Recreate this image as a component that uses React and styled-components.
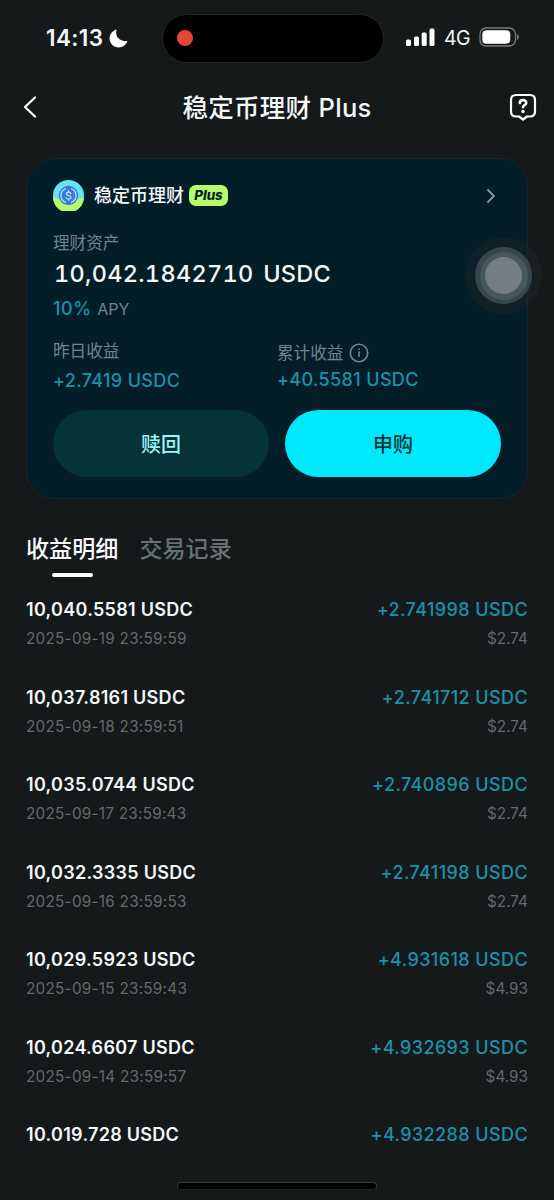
import React from "react";
import styled, { createGlobalStyle } from "styled-components";

const GlobalStyle = createGlobalStyle`
  * {
    box-sizing: border-box;
  }
  body {
    margin: 0;
    background: #15191a;
    font-family: Inter, "Noto Sans CJK SC", sans-serif;
    color: #f4f7f8;
  }
  button {
    font-family: inherit;
    border: none;
    padding: 0;
    background: none;
    color: inherit;
  }
`;

const Page = styled.div`
  position: relative;
  display: flex;
  flex-direction: column;
  width: 554px;
  height: 1200px;
  overflow: hidden;
  background: #15191a;

  > * {
    flex-shrink: 0;
  }
`;

// Status bar
const StatusBar = styled.div`
  display: grid;
  grid-template-columns: 162px 222px 1fr;
  align-items: center;
  height: 76px;
`;

const Clock = styled.div`
  display: flex;
  align-items: center;
  gap: 5px;
  padding-left: 46px;
  font-size: 22.5px;
  line-height: 28px;
  font-weight: 600;
  letter-spacing: 0.4px;
`;

const Island = styled.div`
  display: flex;
  align-items: center;
  height: 49px;
  padding-left: 14px;
  border: 1px solid #222627;
  border-radius: 25px;
  background: #000;
`;

const RecordDot = styled.span`
  width: 16px;
  height: 16px;
  border-radius: 50%;
  background: #e54437;
`;

const Signals = styled.div`
  display: flex;
  align-items: center;
  padding: 0 0 2px 22px;
`;

const Network = styled.span`
  margin: 2px 9px 0 9px;
  font-size: 19.5px;
  line-height: 24px;
  letter-spacing: -0.7px;
`;

// Navigation
const Header = styled.header`
  display: grid;
  grid-template-columns: 60px 1fr 60px;
  align-items: center;
  height: 62px;
`;

const Title = styled.h1`
  margin: 2px 0 0;
  text-align: center;
  font-size: 25.5px;
  line-height: 36px;
  font-weight: 500;
  letter-spacing: 0.3px;
`;

const NavButton = styled.button`
  display: flex;
  justify-content: ${(p) => (p.$end ? "flex-end" : "flex-start")};
  padding: ${(p) => (p.$end ? "0 17px 0 0" : "0 0 0 22px")};
`;

// Asset card
const Card = styled.section`
  height: 341px;
  margin: 20px 26px 0;
  padding: 21px 26px 0;
  border: 1px solid #1b2529;
  border-radius: 28px;
  background: #031e28;
`;

const CardHead = styled.div`
  display: flex;
  align-items: center;
  height: 31px;
`;

const CardTitle = styled.span`
  margin: 1px 5px 0 10px;
  font-size: 18px;
  line-height: 28px;
  font-weight: 500;
`;

const PlusTag = styled.span`
  width: 39px;
  height: 21px;
  border-radius: 7px;
  background: #b4fc6d;
  color: #071b22;
  text-align: center;
  font-size: 13.3px;
  line-height: 21px;
  font-weight: 800;
  font-style: italic;
`;

const HeadArrow = styled.svg`
  margin-left: auto;
`;

const Label = styled.div`
  display: flex;
  align-items: center;
  gap: 6px;
  height: 24px;
  font-size: 16.6px;
  line-height: 24px;
  color: #74838a;
`;

const AssetLabel = styled(Label)`
  margin-top: 20px;
`;

const Balance = styled.div`
  margin: 3px 0 7px 1px;
  font-size: 23.5px;
  line-height: 32px;
  font-weight: 500;
  letter-spacing: 0.3px;
  word-spacing: 3px;
  font-variant-numeric: tabular-nums;
`;

const Apy = styled.div`
  font-size: 16px;
  line-height: 24px;
  color: #74838a;

  b {
    margin-right: 1px;
    font-size: 18px;
    font-weight: 500;
    letter-spacing: 0.6px;
    color: #1b91a9;
  }
`;

const Stats = styled.div`
  display: grid;
  grid-template-columns: 224px 1fr;
  margin-top: 18px;
`;

const Stat = styled.div`
  padding-top: ${(p) => p.$top}px;
`;

const StatValue = styled.div`
  margin-top: ${(p) => p.$gap}px;
  font-size: 18px;
  line-height: 24px;
  font-weight: 500;
  letter-spacing: 0.35px;
  color: #1b91a9;
`;

const Actions = styled.div`
  display: grid;
  grid-template-columns: 1fr 1fr;
  gap: 16px;
  margin-top: 17px;
`;

const ActionButton = styled.button`
  height: 67px;
  padding-bottom: 1px;
  border-radius: 34px;
  font-size: 20px;
  font-weight: 500;
  background: ${(p) => (p.$primary ? "#00e9fb" : "#06323a")};
  color: ${(p) => (p.$primary ? "#06323c" : "#9cf6f8")};
`;

// Tabs and records
const Tabs = styled.nav`
  display: flex;
  gap: 21px;
  height: 46px;
  margin: 32px 26px 0;
`;

const Tab = styled.button`
  display: flex;
  flex-direction: column;
  align-items: center;
  font-size: 23.1px;
  line-height: 36px;
  font-weight: 500;
  color: ${(p) => (p.$active ? "#f8fafa" : "#677275")};

  &::after {
    content: "";
    width: 41px;
    height: 4px;
    margin-top: 6px;
    border-radius: 2px;
    background: ${(p) => (p.$active ? "#fff" : "transparent")};
  }
`;

const Records = styled.ul`
  margin: 0;
  padding: 21px 26px 0;
  list-style: none;
`;

const Record = styled.li`
  display: flex;
  justify-content: space-between;
  height: 87.55px;
`;

const Column = styled.div`
  text-align: ${(p) => (p.$right ? "right" : "left")};
`;

const Amount = styled.div`
  font-size: 18px;
  line-height: 24px;
  font-weight: ${(p) => (p.$gain ? 500 : 600)};
  letter-spacing: ${(p) => (p.$gain ? 0.4 : 0.28)}px;
  color: ${(p) => (p.$gain ? "#1b91a9" : "#f4f7f8")};
`;

const Meta = styled.div`
  margin-top: 7px;
  font-size: 15.3px;
  line-height: 20px;
  letter-spacing: ${(p) => p.$spacing || 0}px;
  color: #626a6d;
`;

// Overlays
const AssistiveTouch = styled.div`
  position: absolute;
  left: 465px;
  top: 237px;
  display: grid;
  place-items: center;
  width: 77px;
  height: 77px;
  border-radius: 50%;
  background: rgba(40, 44, 47, 0.3);
`;

const Ring = styled.div`
  display: grid;
  place-items: center;
  width: ${(p) => p.$size}px;
  height: ${(p) => p.$size}px;
  border-radius: 50%;
  background: ${(p) => p.$color};
`;

const HomeIndicator = styled.div`
  position: absolute;
  left: 177px;
  bottom: 10px;
  width: 200px;
  height: 8px;
  border: 1px solid #363a3b;
  border-bottom-color: #202425;
  border-radius: 4px;
  background: #000;
`;

const records = [
  ["10,040.5581", "2025-09-19 23:59:59", "2.741998", "2.74"],
  ["10,037.8161", "2025-09-18 23:59:51", "2.741712", "2.74"],
  ["10,035.0744", "2025-09-17 23:59:43", "2.740896", "2.74"],
  ["10,032.3335", "2025-09-16 23:59:53", "2.741198", "2.74"],
  ["10,029.5923", "2025-09-15 23:59:43", "4.931618", "4.93"],
  ["10,024.6607", "2025-09-14 23:59:57", "4.932693", "4.93"],
  ["10.019.728", null, "4.932288", null],
];

function MoonIcon() {
  return (
    <svg width="19" height="19" viewBox="0 0 19 19">
      <path
        d="M7.600 0.600C5.500 7.400 10.500 13.200 18.500 12C17 16 13.700 18.400 9.700 18.400C4.600 18.400 0.600 14.500 0.600 9.500C0.600 5.400 3.500 1.800 7.600 0.600Z"
        fill="#fff"
      />
    </svg>
  );
}

function SignalIcon() {
  return (
    <svg width="29" height="19" viewBox="0 0 29 19" fill="#fff">
      <rect x="0" y="11.500" width="5" height="6.500" rx="1.500" />
      <rect x="8" y="8.500" width="5" height="9.500" rx="1.500" />
      <rect x="15.700" y="4.500" width="5" height="13.500" rx="1.500" />
      <rect x="23.500" y="0.500" width="5" height="17.500" rx="1.500" />
    </svg>
  );
}

function BatteryIcon() {
  return (
    <svg width="41" height="20" viewBox="0 0 41 20">
      <rect x="1" y="1" width="35.500" height="18" rx="6" fill="none" stroke="#777b7c" strokeWidth="1.300" />
      <rect x="3.300" y="3.300" width="28" height="13.400" rx="4" fill="#fff" />
      <path d="M38 7Q40 8 40 10T38 13Z" fill="#777b7c" />
    </svg>
  );
}

function BackIcon() {
  return (
    <svg width="16" height="24" viewBox="0 0 16 24" fill="none" stroke="#fff" strokeWidth="2.300" strokeLinecap="round" strokeLinejoin="round">
      <path d="M13 2.500L3 12l10 9.500" />
    </svg>
  );
}

function HelpIcon() {
  return (
    <svg width="28" height="28" viewBox="0 0 28 28" fill="none" stroke="#fff" strokeWidth="2.200" strokeLinecap="round" strokeLinejoin="round">
      <path d="M7 2H21Q26 2 26 7V18.500Q26 23.500 21 23.500H18L14 26.500L10 23.500H7Q2 23.500 2 18.500V7Q2 2 7 2Z" />
      <path d="M10.800 10C10.900 6.200 17.200 6.200 17.200 9.900C17.200 12.200 14 12.100 14 14.200" strokeWidth="2.600" />
      <circle cx="14" cy="18.500" r="1.700" fill="#fff" stroke="none" />
    </svg>
  );
}

function CoinIcon() {
  return (
    <svg width="31" height="31" viewBox="0 0 31 31">
      <circle cx="15.500" cy="15.500" r="15.500" fill="#64e4f4" />
      <path d="M0 17Q15.500 25 31 17A15.500 15.500 0 0 1 0 17Z" fill="#b4fc6d" />
      <circle cx="15.500" cy="15.500" r="9.700" fill="#327bdf" />
      <g fill="none" stroke="#cfe6ff" strokeWidth="1.200" strokeLinecap="round">
        <path d="M12.600 8.700A7.300 7.300 0 0 0 12.600 22.300M18.400 8.700A7.300 7.300 0 0 1 18.400 22.300" />
        <path d="M17.700 13.600C17.300 11.600 13.300 11.600 13.300 13.700C13.300 16 17.900 15 17.900 17.300C17.900 19.500 13.500 19.500 13.100 17.500M15.500 10.800V12M15.500 19.200V20.300" />
      </g>
    </svg>
  );
}

function InfoIcon() {
  return (
    <svg width="20" height="20" viewBox="0 0 20 20" fill="none" stroke="#74838a" strokeWidth="1.600">
      <circle cx="10" cy="10" r="8.700" />
      <path d="M10 8.500V14M10 5.600V7.100" />
    </svg>
  );
}

export default function App() {
  return (
    <Page>
      <GlobalStyle />
      <StatusBar>
        <Clock>
          14:13
          <MoonIcon />
        </Clock>
        <Island>
          <RecordDot />
        </Island>
        <Signals>
          <SignalIcon />
          <Network>4G</Network>
          <BatteryIcon />
        </Signals>
      </StatusBar>

      <Header>
        <NavButton>
          <BackIcon />
        </NavButton>
        <Title>稳定币理财 Plus</Title>
        <NavButton $end>
          <HelpIcon />
        </NavButton>
      </Header>

      <Card>
        <CardHead>
          <CoinIcon />
          <CardTitle>稳定币理财</CardTitle>
          <PlusTag>Plus</PlusTag>
          <HeadArrow width="20" height="20" viewBox="0 0 20 20" fill="none" stroke="#8b999d" strokeWidth="1.800">
            <path d="M6.500 3.500L12.900 10L6.500 16.500" />
          </HeadArrow>
        </CardHead>
        <AssetLabel>理财资产</AssetLabel>
        <Balance>10,042.1842710 USDC</Balance>
        <Apy>
          <b>10%</b> APY
        </Apy>
        <Stats>
          <Stat $top={0}>
            <Label>昨日收益</Label>
            <StatValue $gap={6}>+2.7419 USDC</StatValue>
          </Stat>
          <Stat $top={2}>
            <Label>
              累计收益
              <InfoIcon />
            </Label>
            <StatValue $gap={3}>+40.5581 USDC</StatValue>
          </Stat>
        </Stats>
        <Actions>
          <ActionButton>赎回</ActionButton>
          <ActionButton $primary>申购</ActionButton>
        </Actions>
      </Card>

      <Tabs>
        <Tab $active>收益明细</Tab>
        <Tab>交易记录</Tab>
      </Tabs>

      <Records>
        {records.map(([total, time, gain, usd]) => (
          <Record key={total}>
            <Column>
              <Amount>{total} USDC</Amount>
              {time && <Meta $spacing={0.25}>{time}</Meta>}
            </Column>
            <Column $right>
              <Amount $gain>+{gain} USDC</Amount>
              {usd && <Meta>${usd}</Meta>}
            </Column>
          </Record>
        ))}
      </Records>

      <AssistiveTouch>
        <Ring $size={57} $color="#36464d">
          <Ring $size={48} $color="#47575e">
            <Ring $size={37} $color="#737f85" />
          </Ring>
        </Ring>
      </AssistiveTouch>
      <HomeIndicator />
    </Page>
  );
}
